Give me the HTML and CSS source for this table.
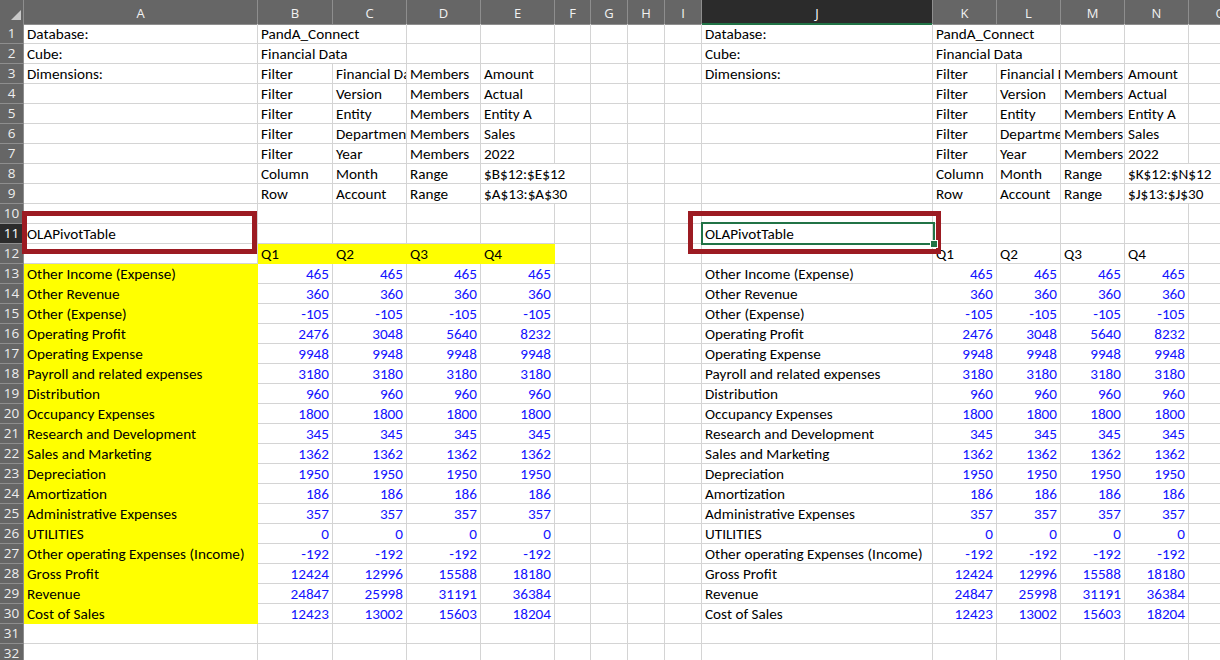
FILE: index.html
```html
<!DOCTYPE html>
<html>
<head>
<meta charset="utf-8">
<link rel="stylesheet" href="styles.css">
</head>
<body>
<div class="sheet">
  <div class="r hr">
    <div class="h corner"><svg width="24" height="24" viewBox="0 0 24 24"><polygon points="11,20 21,20 21,10" fill="#c8c8c8"/></svg></div>
    <div class="h">A</div><div class="h">B</div><div class="h">C</div><div class="h">D</div><div class="h">E</div><div class="h">F</div><div class="h">G</div><div class="h">H</div><div class="h">I</div><div class="h sel">J</div><div class="h">K</div><div class="h">L</div><div class="h">M</div><div class="h">N</div><div class="h">O</div>
  </div>
  <div class="r"><div class="rn">1</div><div class="c">Database:</div><div class="c s2">PandA_Connect</div><div class="c"></div><div class="c"></div><div class="c"></div><div class="c"></div><div class="c"></div><div class="c"></div><div class="c">Database:</div><div class="c s2">PandA_Connect</div><div class="c"></div><div class="c"></div><div class="c"></div></div>
  <div class="r"><div class="rn">2</div><div class="c">Cube:</div><div class="c s2">Financial Data</div><div class="c"></div><div class="c"></div><div class="c"></div><div class="c"></div><div class="c"></div><div class="c"></div><div class="c">Cube:</div><div class="c s2">Financial Data</div><div class="c"></div><div class="c"></div><div class="c"></div></div>
  <div class="r"><div class="rn">3</div><div class="c">Dimensions:</div><div class="c">Filter</div><div class="c clip">Financial Data</div><div class="c">Members</div><div class="c">Amount</div><div class="c"></div><div class="c"></div><div class="c"></div><div class="c"></div><div class="c">Dimensions:</div><div class="c">Filter</div><div class="c clip">Financial Data</div><div class="c">Members</div><div class="c">Amount</div><div class="c"></div></div>
  <div class="r"><div class="rn">4</div><div class="c"></div><div class="c">Filter</div><div class="c">Version</div><div class="c">Members</div><div class="c">Actual</div><div class="c"></div><div class="c"></div><div class="c"></div><div class="c"></div><div class="c"></div><div class="c">Filter</div><div class="c">Version</div><div class="c">Members</div><div class="c">Actual</div><div class="c"></div></div>
  <div class="r"><div class="rn">5</div><div class="c"></div><div class="c">Filter</div><div class="c">Entity</div><div class="c">Members</div><div class="c">Entity A</div><div class="c"></div><div class="c"></div><div class="c"></div><div class="c"></div><div class="c"></div><div class="c">Filter</div><div class="c">Entity</div><div class="c">Members</div><div class="c">Entity A</div><div class="c"></div></div>
  <div class="r"><div class="rn">6</div><div class="c"></div><div class="c">Filter</div><div class="c clip">Department</div><div class="c">Members</div><div class="c">Sales</div><div class="c"></div><div class="c"></div><div class="c"></div><div class="c"></div><div class="c"></div><div class="c">Filter</div><div class="c clip">Department</div><div class="c">Members</div><div class="c">Sales</div><div class="c"></div></div>
  <div class="r"><div class="rn">7</div><div class="c"></div><div class="c">Filter</div><div class="c">Year</div><div class="c">Members</div><div class="c">2022</div><div class="c"></div><div class="c"></div><div class="c"></div><div class="c"></div><div class="c"></div><div class="c">Filter</div><div class="c">Year</div><div class="c">Members</div><div class="c">2022</div><div class="c"></div></div>
  <div class="r"><div class="rn">8</div><div class="c"></div><div class="c">Column</div><div class="c">Month</div><div class="c">Range</div><div class="c s2">$B$12:$E$12</div><div class="c"></div><div class="c"></div><div class="c"></div><div class="c"></div><div class="c">Column</div><div class="c">Month</div><div class="c">Range</div><div class="c s2">$K$12:$N$12</div></div>
  <div class="r"><div class="rn">9</div><div class="c"></div><div class="c">Row</div><div class="c">Account</div><div class="c">Range</div><div class="c s2">$A$13:$A$30</div><div class="c"></div><div class="c"></div><div class="c"></div><div class="c"></div><div class="c">Row</div><div class="c">Account</div><div class="c">Range</div><div class="c s2">$J$13:$J$30</div></div>
  <div class="r"><div class="rn">10</div><div class="c"></div><div class="c"></div><div class="c"></div><div class="c"></div><div class="c"></div><div class="c"></div><div class="c"></div><div class="c"></div><div class="c"></div><div class="c"></div><div class="c"></div><div class="c"></div><div class="c"></div><div class="c"></div><div class="c"></div></div>
  <div class="r"><div class="rn rsel">11</div><div class="c">OLAPivotTable</div><div class="c"></div><div class="c"></div><div class="c"></div><div class="c"></div><div class="c"></div><div class="c"></div><div class="c"></div><div class="c"></div><div class="c">OLAPivotTable</div><div class="c"></div><div class="c"></div><div class="c"></div><div class="c"></div><div class="c"></div></div>
  <div class="r"><div class="rn">12</div><div class="c"></div><div class="c y">Q1</div><div class="c y">Q2</div><div class="c y">Q3</div><div class="c y">Q4</div><div class="c"></div><div class="c"></div><div class="c"></div><div class="c"></div><div class="c"></div><div class="c">Q1</div><div class="c">Q2</div><div class="c">Q3</div><div class="c">Q4</div><div class="c"></div></div>
  <div class="r"><div class="rn">13</div><div class="c y">Other Income (Expense)</div><div class="c n">465</div><div class="c n">465</div><div class="c n">465</div><div class="c n">465</div><div class="c"></div><div class="c"></div><div class="c"></div><div class="c"></div><div class="c">Other Income (Expense)</div><div class="c n">465</div><div class="c n">465</div><div class="c n">465</div><div class="c n">465</div><div class="c"></div></div>
  <div class="r"><div class="rn">14</div><div class="c y">Other Revenue</div><div class="c n">360</div><div class="c n">360</div><div class="c n">360</div><div class="c n">360</div><div class="c"></div><div class="c"></div><div class="c"></div><div class="c"></div><div class="c">Other Revenue</div><div class="c n">360</div><div class="c n">360</div><div class="c n">360</div><div class="c n">360</div><div class="c"></div></div>
  <div class="r"><div class="rn">15</div><div class="c y">Other (Expense)</div><div class="c n">-105</div><div class="c n">-105</div><div class="c n">-105</div><div class="c n">-105</div><div class="c"></div><div class="c"></div><div class="c"></div><div class="c"></div><div class="c">Other (Expense)</div><div class="c n">-105</div><div class="c n">-105</div><div class="c n">-105</div><div class="c n">-105</div><div class="c"></div></div>
  <div class="r"><div class="rn">16</div><div class="c y">Operating Profit</div><div class="c n">2476</div><div class="c n">3048</div><div class="c n">5640</div><div class="c n">8232</div><div class="c"></div><div class="c"></div><div class="c"></div><div class="c"></div><div class="c">Operating Profit</div><div class="c n">2476</div><div class="c n">3048</div><div class="c n">5640</div><div class="c n">8232</div><div class="c"></div></div>
  <div class="r"><div class="rn">17</div><div class="c y">Operating Expense</div><div class="c n">9948</div><div class="c n">9948</div><div class="c n">9948</div><div class="c n">9948</div><div class="c"></div><div class="c"></div><div class="c"></div><div class="c"></div><div class="c">Operating Expense</div><div class="c n">9948</div><div class="c n">9948</div><div class="c n">9948</div><div class="c n">9948</div><div class="c"></div></div>
  <div class="r"><div class="rn">18</div><div class="c y">Payroll and related expenses</div><div class="c n">3180</div><div class="c n">3180</div><div class="c n">3180</div><div class="c n">3180</div><div class="c"></div><div class="c"></div><div class="c"></div><div class="c"></div><div class="c">Payroll and related expenses</div><div class="c n">3180</div><div class="c n">3180</div><div class="c n">3180</div><div class="c n">3180</div><div class="c"></div></div>
  <div class="r"><div class="rn">19</div><div class="c y">Distribution</div><div class="c n">960</div><div class="c n">960</div><div class="c n">960</div><div class="c n">960</div><div class="c"></div><div class="c"></div><div class="c"></div><div class="c"></div><div class="c">Distribution</div><div class="c n">960</div><div class="c n">960</div><div class="c n">960</div><div class="c n">960</div><div class="c"></div></div>
  <div class="r"><div class="rn">20</div><div class="c y">Occupancy Expenses</div><div class="c n">1800</div><div class="c n">1800</div><div class="c n">1800</div><div class="c n">1800</div><div class="c"></div><div class="c"></div><div class="c"></div><div class="c"></div><div class="c">Occupancy Expenses</div><div class="c n">1800</div><div class="c n">1800</div><div class="c n">1800</div><div class="c n">1800</div><div class="c"></div></div>
  <div class="r"><div class="rn">21</div><div class="c y">Research and Development</div><div class="c n">345</div><div class="c n">345</div><div class="c n">345</div><div class="c n">345</div><div class="c"></div><div class="c"></div><div class="c"></div><div class="c"></div><div class="c">Research and Development</div><div class="c n">345</div><div class="c n">345</div><div class="c n">345</div><div class="c n">345</div><div class="c"></div></div>
  <div class="r"><div class="rn">22</div><div class="c y">Sales and Marketing</div><div class="c n">1362</div><div class="c n">1362</div><div class="c n">1362</div><div class="c n">1362</div><div class="c"></div><div class="c"></div><div class="c"></div><div class="c"></div><div class="c">Sales and Marketing</div><div class="c n">1362</div><div class="c n">1362</div><div class="c n">1362</div><div class="c n">1362</div><div class="c"></div></div>
  <div class="r"><div class="rn">23</div><div class="c y">Depreciation</div><div class="c n">1950</div><div class="c n">1950</div><div class="c n">1950</div><div class="c n">1950</div><div class="c"></div><div class="c"></div><div class="c"></div><div class="c"></div><div class="c">Depreciation</div><div class="c n">1950</div><div class="c n">1950</div><div class="c n">1950</div><div class="c n">1950</div><div class="c"></div></div>
  <div class="r"><div class="rn">24</div><div class="c y">Amortization</div><div class="c n">186</div><div class="c n">186</div><div class="c n">186</div><div class="c n">186</div><div class="c"></div><div class="c"></div><div class="c"></div><div class="c"></div><div class="c">Amortization</div><div class="c n">186</div><div class="c n">186</div><div class="c n">186</div><div class="c n">186</div><div class="c"></div></div>
  <div class="r"><div class="rn">25</div><div class="c y">Administrative Expenses</div><div class="c n">357</div><div class="c n">357</div><div class="c n">357</div><div class="c n">357</div><div class="c"></div><div class="c"></div><div class="c"></div><div class="c"></div><div class="c">Administrative Expenses</div><div class="c n">357</div><div class="c n">357</div><div class="c n">357</div><div class="c n">357</div><div class="c"></div></div>
  <div class="r"><div class="rn">26</div><div class="c y">UTILITIES</div><div class="c n">0</div><div class="c n">0</div><div class="c n">0</div><div class="c n">0</div><div class="c"></div><div class="c"></div><div class="c"></div><div class="c"></div><div class="c">UTILITIES</div><div class="c n">0</div><div class="c n">0</div><div class="c n">0</div><div class="c n">0</div><div class="c"></div></div>
  <div class="r"><div class="rn">27</div><div class="c y">Other operating Expenses (Income)</div><div class="c n">-192</div><div class="c n">-192</div><div class="c n">-192</div><div class="c n">-192</div><div class="c"></div><div class="c"></div><div class="c"></div><div class="c"></div><div class="c">Other operating Expenses (Income)</div><div class="c n">-192</div><div class="c n">-192</div><div class="c n">-192</div><div class="c n">-192</div><div class="c"></div></div>
  <div class="r"><div class="rn">28</div><div class="c y">Gross Profit</div><div class="c n">12424</div><div class="c n">12996</div><div class="c n">15588</div><div class="c n">18180</div><div class="c"></div><div class="c"></div><div class="c"></div><div class="c"></div><div class="c">Gross Profit</div><div class="c n">12424</div><div class="c n">12996</div><div class="c n">15588</div><div class="c n">18180</div><div class="c"></div></div>
  <div class="r"><div class="rn">29</div><div class="c y">Revenue</div><div class="c n">24847</div><div class="c n">25998</div><div class="c n">31191</div><div class="c n">36384</div><div class="c"></div><div class="c"></div><div class="c"></div><div class="c"></div><div class="c">Revenue</div><div class="c n">24847</div><div class="c n">25998</div><div class="c n">31191</div><div class="c n">36384</div><div class="c"></div></div>
  <div class="r"><div class="rn">30</div><div class="c y">Cost of Sales</div><div class="c n">12423</div><div class="c n">13002</div><div class="c n">15603</div><div class="c n">18204</div><div class="c"></div><div class="c"></div><div class="c"></div><div class="c"></div><div class="c">Cost of Sales</div><div class="c n">12423</div><div class="c n">13002</div><div class="c n">15603</div><div class="c n">18204</div><div class="c"></div></div>
  <div class="r"><div class="rn">31</div><div class="c"></div><div class="c"></div><div class="c"></div><div class="c"></div><div class="c"></div><div class="c"></div><div class="c"></div><div class="c"></div><div class="c"></div><div class="c"></div><div class="c"></div><div class="c"></div><div class="c"></div><div class="c"></div><div class="c"></div></div>
  <div class="r"><div class="rn">32</div><div class="c"></div><div class="c"></div><div class="c"></div><div class="c"></div><div class="c"></div><div class="c"></div><div class="c"></div><div class="c"></div><div class="c"></div><div class="c"></div><div class="c"></div><div class="c"></div><div class="c"></div><div class="c"></div><div class="c"></div></div>

  <div class="redbox left"></div>
  <div class="redbox right"></div>
  <div class="cursor"><span class="handle"></span></div>
</div>
</body>
</html>
```

FILE: styles.css
```css
html, body {
  margin: 0;
  padding: 0;
  background: #ffffff;
  overflow: hidden;
}

.sheet {
  position: relative;
  width: 1220px;
  height: 660px;
  overflow: hidden;
  font-family: Carlito, Lato, "Liberation Sans", sans-serif;
  font-size: 15.2px;
  color: #000000;
}

.r {
  display: grid;
  grid-template-columns: 24px 234px 75px 74px 74px 74px 36px 37px 37px 37px 231px 64px 64px 64px 64px 64px;
  height: 20px;
}

.r.hr {
  height: 24px;
}

.h {
  background: #666666;
  color: #f2f2f2;
  font-family: "Open Sans", "Noto Sans", sans-serif;
  font-size: 13px;
  text-align: center;
  line-height: 20px;
  padding-top: 3px;
  border-right: 1px solid #8e8e8e;
  border-bottom: 1px solid #8e8e8e;
  box-sizing: border-box;
  white-space: nowrap;
}

.h.corner {
  padding: 0;
  line-height: 0;
}

.h.sel {
  background: #2b2b2b;
  color: #ffffff;
  border-bottom: 2px solid #217346;
}

.rn {
  background: #666666;
  color: #eeeeee;
  font-family: "Open Sans", "Noto Sans", sans-serif;
  font-size: 13.5px;
  text-align: center;
  line-height: 19px;
  border-right: 1px solid #8e8e8e;
  border-bottom: 1px solid #8e8e8e;
  box-sizing: border-box;
}

.rn.rsel {
  background: #2b2b2b;
  color: #ffffff;
}

.c {
  box-sizing: border-box;
  border-right: 1px solid #d4d4d4;
  border-bottom: 1px solid #d4d4d4;
  padding: 0 3px;
  line-height: 20px;
  white-space: nowrap;
  overflow: hidden;
}

.c.clip {
  padding-right: 0;
}

.s2 {
  grid-column: span 2;
}

.n {
  text-align: right;
  color: #1212ff;
}

.y {
  background: #ffff00;
  border-color: #ffff00;
}

.redbox {
  position: absolute;
  top: 211px;
  height: 43px;
  box-sizing: border-box;
  border: 5px solid #9c1b22;
}

.redbox.left {
  left: 22px;
  width: 235px;
}

.redbox.right {
  left: 688px;
  width: 253px;
}

.cursor {
  position: absolute;
  left: 701px;
  top: 222px;
  width: 234px;
  height: 23px;
  box-sizing: border-box;
  border: 2px solid #217346;
}

.handle {
  position: absolute;
  right: -4px;
  bottom: -4px;
  width: 6px;
  height: 6px;
  background: #217346;
  box-shadow: 0 0 0 1px #ffffff;
}
```
